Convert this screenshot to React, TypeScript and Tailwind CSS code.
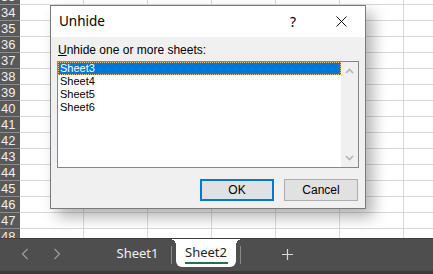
import React from 'react';

const ROWS = [33, 34, 35, 36, 37, 38, 39, 40, 41, 42, 43, 44, 45, 46, 47, 48];
const COLS = [0, 1, 2, 3, 4, 5, 6];
const SHEETS = ['Sheet3', 'Sheet4', 'Sheet5', 'Sheet6'];

const ui = { fontFamily: '"Noto Sans", "Open Sans", sans-serif' };
const dlg = { fontFamily: '"Liberation Sans", Arial, sans-serif' };

function Chevron({ up }: { up?: boolean }) {
  return (
    <svg width="9" height="6" viewBox="0 0 9 6">
      <polyline
        points={up ? '1,5 4.5,1.5 8,5' : '1,1 4.5,4.5 8,1'}
        fill="none"
        stroke="#b4b4b4"
        strokeWidth="1.6"
      />
    </svg>
  );
}

function UnhideDialog() {
  return (
    <div
      className="absolute left-[50px] top-[5px] w-[316px] h-[204px] flex flex-col border border-[#7a7a7a] bg-[#f0f0f0] shadow-[7px_8px_14px_rgba(0,0,0,0.3)]"
      style={ui}
    >
      <div className="h-[31px] bg-white flex items-center pl-[8px] text-[13.5px] text-black">
        <span className="flex-1">Unhide</span>
        <span className="w-[10px] mr-[36px] text-[14px]">?</span>
        <svg width="11" height="11" viewBox="0 0 11 11" className="mr-[18px]">
          <path d="M0.5 0.5 L10.5 10.5 M10.5 0.5 L0.5 10.5" stroke="#111" strokeWidth="1" />
        </svg>
      </div>
      <div className="flex-1 flex flex-col px-[6px] pt-[6px]" style={dlg}>
        <div className="text-[12px] leading-[15px] text-black pl-[1px]">
          <span className="underline">U</span>nhide one or more sheets:
        </div>
        <div className="mt-[3px] h-[107px] border border-[#828790] bg-white flex">
          <div className="flex-1 flex flex-col text-[11px] leading-[13px] text-black">
            {SHEETS.map((s, i) => (
              <div
                key={s}
                className={
                  i === 0
                    ? 'h-[13px] pl-[2px] bg-[#0078d7] text-white outline-1 outline-dotted outline-offset-[-1px] outline-[#f6c27a]'
                    : 'h-[13px] pl-[2px]'
                }
              >
                {s}
              </div>
            ))}
          </div>
          <div className="w-[17px] bg-[#f0f0f0] flex flex-col items-center justify-between py-[6px]">
            <Chevron up />
            <Chevron />
          </div>
        </div>
        <div className="mt-[11px] flex justify-end gap-[10px] pr-[1px] text-[12px] text-black">
          <button className="w-[74px] h-[22px] bg-[#e1e1e1] border-2 border-[#0078d7]">OK</button>
          <button className="w-[74px] h-[22px] bg-[#e1e1e1] border border-[#adadad]">Cancel</button>
        </div>
      </div>
    </div>
  );
}

function TabBar() {
  return (
    <div
      className="h-[36px] shrink-0 bg-[#4e4e4e] border-t border-[#3e3e3e] border-b-[3px] border-b-[#3a3a3a] flex items-start text-[13px]"
      style={ui}
    >
      <div className="w-[97px] h-[30px] flex items-center pl-[21px] gap-[24px]">
        <svg width="8" height="12" viewBox="0 0 8 12">
          <polyline points="6.5,1 1.5,6 6.5,11" fill="none" stroke="#9c9c9c" strokeWidth="1.2" />
        </svg>
        <svg width="8" height="12" viewBox="0 0 8 12">
          <polyline points="1.5,1 6.5,6 1.5,11" fill="none" stroke="#9c9c9c" strokeWidth="1.2" />
        </svg>
      </div>
      <div className="w-[74px] h-[30px] flex items-center justify-center pl-[7px] text-[#f2f2f2]">Sheet1</div>
      <div className="w-px h-[18px] mt-[7px] bg-[#8a8a8a]" />
      <div className="relative ml-[4px] w-[60px] h-[28px] bg-white rounded-b-[6px] flex flex-col items-center pt-[4px] text-[#222]">
        <span className="absolute -left-[6px] top-0 w-[6px] h-[6px] bg-[radial-gradient(circle_at_0_100%,transparent_6px,white_6px)]" />
        <span className="absolute -right-[6px] top-0 w-[6px] h-[6px] bg-[radial-gradient(circle_at_100%_100%,transparent_6px,white_6px)]" />
        <span className="leading-[18px]">Sheet2</span>
        <span className="mt-[1px] w-[43px] h-[2px] bg-[#217346]" />
      </div>
      <div className="ml-[4px] w-px h-[18px] mt-[7px] bg-[#8a8a8a]" />
      <div className="w-[93px] h-[30px] flex items-center justify-center">
        <svg width="11" height="11" viewBox="0 0 11 11">
          <path d="M5.5 0 V11 M0 5.5 H11" stroke="#d8d8d8" strokeWidth="1.2" />
        </svg>
      </div>
    </div>
  );
}

export default function App() {
  return (
    <div className="relative w-[433px] h-[274px] overflow-hidden bg-white flex flex-col">
      <div className="flex-1 overflow-hidden">
        <div className="-mt-[11px] flex flex-col">
          {ROWS.map((r) => (
            <div key={r} className="flex h-[16px] shrink-0">
              <div
                className="w-[20px] shrink-0 bg-[#595959] border-b border-[#8c8c8c] text-[13px] leading-[15px] text-[#eeeeee] pl-[1px]"
                style={dlg}
              >
                {r}
              </div>
              {COLS.map((c) => (
                <div key={c} className="w-[64px] shrink-0 border-r border-b border-[#d9d9d9]" />
              ))}
            </div>
          ))}
        </div>
      </div>
      <TabBar />
      <UnhideDialog />
    </div>
  );
}
